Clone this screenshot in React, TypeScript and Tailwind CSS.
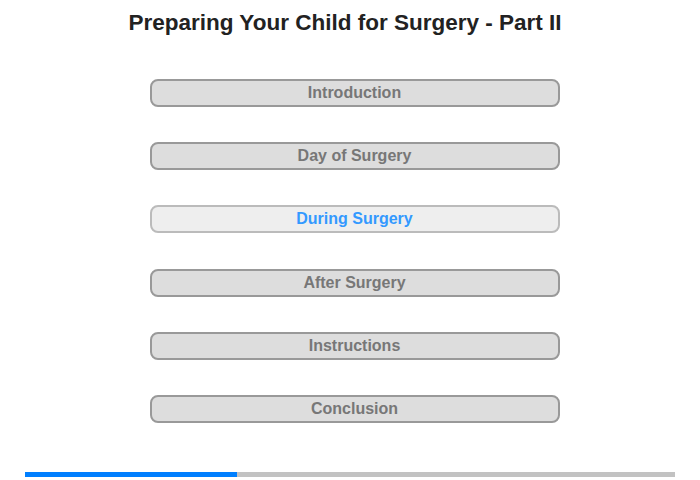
const sections = [
  { label: 'Introduction', active: false },
  { label: 'Day of Surgery', active: false },
  { label: 'During Surgery', active: true },
  { label: 'After Surgery', active: false },
  { label: 'Instructions', active: false },
  { label: 'Conclusion', active: false },
];

export default function App() {
  return (
    <div className="w-[700px] h-[480px] bg-white overflow-hidden font-['Liberation_Sans',Arial,sans-serif]">
      <h1 className="h-[44px] pt-[10px] pr-[10px] text-center text-[22.5px] leading-[26px] font-bold text-[#222]">
        Preparing Your Child for Surgery - Part II
      </h1>

      {/* Section menu */}
      <div className="mt-[35px] flex flex-col gap-[35.2px] items-center pl-[9px]">
        {sections.map((s) => (
          <button
            key={s.label}
            className={
              s.active
                ? 'w-[410px] h-[28px] rounded-[8px] border-2 border-[#bbb] bg-[#eee] text-[16px] font-bold text-[#3399ff]'
                : 'w-[410px] h-[28px] rounded-[8px] border-2 border-[#999] bg-[#ddd] text-[16px] font-bold text-[#777]'
            }
          >
            {s.label}
          </button>
        ))}
      </div>

      {/* Progress */}
      <div className="mt-[49px] mx-[25px] h-[5px] bg-[#c2c2c2] flex">
        <div className="w-[212px] h-full bg-[#007fff]" />
      </div>
    </div>
  );
}
